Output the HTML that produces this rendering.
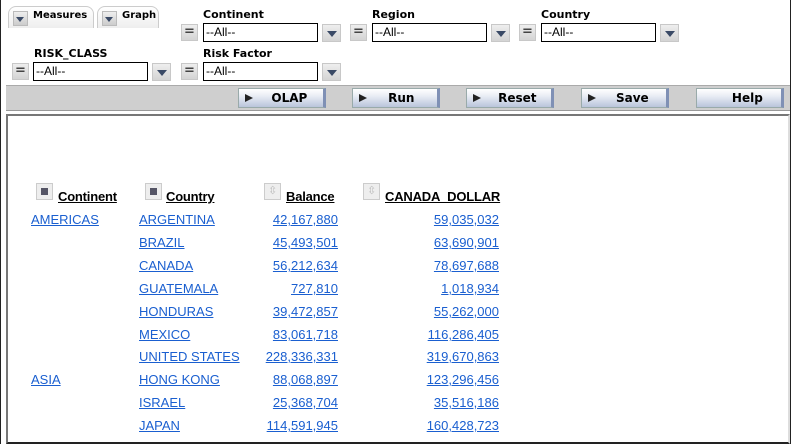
<!DOCTYPE html>
<html><head><meta charset="utf-8"><style>
*{box-sizing:border-box;margin:0;padding:0}
body{width:791px;height:444px;background:#fff;position:relative;overflow:hidden;font-family:"DejaVu Sans",Verdana,sans-serif}
.a{position:absolute}
.lbl{font-size:11px;font-weight:bold;color:#000}
.eq{width:17px;height:17px;background:linear-gradient(#eee,#d4d4d4);border:1px solid #c8c8c8;font-size:13px;line-height:14px;text-align:center;color:#444;font-weight:bold}
.inp{width:115px;height:19px;border:1px solid #000;background:#fff;font-family:"Liberation Sans",Arial,sans-serif;font-size:12px;line-height:17px;padding-left:2px}
.dd{width:19px;height:18px;background:linear-gradient(#eee,#d4d4d4);border:1px solid #c8c8c8}
.dd:after,.tab i:after{content:"";position:absolute;left:4px;top:6px;border-left:5px solid transparent;border-right:5px solid transparent;border-top:6px solid #3a4a66}
.btn{height:20px;width:88px;top:88px;background:linear-gradient(#fff 0%,#e8ecf4 40%,#b9c4db 100%);border:1px solid #9aa;border-right:3px solid #7f90b5;font-size:12px;font-weight:bold;text-align:center;line-height:18px}
.btn b{position:absolute;left:6px;top:5px;border-top:4px solid transparent;border-bottom:4px solid transparent;border-left:8px solid #222}
.tab{height:22px;top:6px;border:1px solid #ccc;border-bottom:none;border-radius:8px 8px 0 0;background:linear-gradient(#fff,#eee);font-size:10px;font-weight:bold;padding:3px 0 0 24px}
.tab i{position:absolute;left:4px;top:4px;width:15px;height:15px;background:linear-gradient(#eee,#ccc);border:1px solid #bbb}
.tab i:after{left:2px;top:5px;border-left-width:4px;border-right-width:4px;border-top-width:5px}
.f{font-family:"Liberation Sans",Arial,sans-serif;font-size:13px;color:#1a5fd0;text-decoration:underline;position:absolute}
.h{font-family:"Liberation Sans",Arial,sans-serif;font-size:13px;font-weight:bold;text-decoration:underline;position:absolute;top:189px;letter-spacing:-0.2px}
.ic{position:absolute;top:183px;width:17px;height:17px;background:#eee;border:1px solid #ccc}
.ic.s:after{content:"";position:absolute;left:4px;top:4px;width:7px;height:7px;background:#556}
.ic.u:after{content:"⇳";position:absolute;left:3px;top:0;font-size:11px;color:#bbb}
.r{text-align:right}
</style></head><body>
<div class="a" style="left:0;top:0;width:1px;height:444px;background:#222"></div>
<div class="a" style="right:0;top:0;width:1px;height:444px;background:#222"></div>
<div class="a tab" style="left:8px;width:86px"><i></i>Measures</div>
<div class="a tab" style="left:97px;width:62px"><i></i>Graph</div>

<div class="a lbl" style="left:203px;top:8px">Continent</div>
<div class="a eq" style="left:181px;top:24px">=</div><div class="a inp" style="left:203px;top:23px">--All--</div><div class="a dd" style="left:322px;top:24px"></div>
<div class="a lbl" style="left:372px;top:8px">Region</div>
<div class="a eq" style="left:350px;top:24px">=</div><div class="a inp" style="left:372px;top:23px">--All--</div><div class="a dd" style="left:491px;top:24px"></div>
<div class="a lbl" style="left:541px;top:8px">Country</div>
<div class="a eq" style="left:519px;top:24px">=</div><div class="a inp" style="left:541px;top:23px">--All--</div><div class="a dd" style="left:660px;top:24px"></div>

<div class="a lbl" style="left:34px;top:47px">RISK_CLASS</div>
<div class="a eq" style="left:12px;top:63px">=</div><div class="a inp" style="left:33px;top:62px">--All--</div><div class="a dd" style="left:152px;top:63px"></div>
<div class="a lbl" style="left:203px;top:47px">Risk Factor</div>
<div class="a eq" style="left:181px;top:63px">=</div><div class="a inp" style="left:203px;top:62px">--All--</div><div class="a dd" style="left:322px;top:63px"></div>

<div class="a" style="left:6px;top:85px;width:784px;height:26px;background:#cfcfcf;border-top:1px solid #aaa;border-bottom:1px solid #999"></div>
<div class="a btn" style="left:238px"><b></b>&nbsp;&nbsp;&nbsp;&nbsp;OLAP</div>
<div class="a btn" style="left:352px"><b></b>&nbsp;&nbsp;&nbsp;Run</div>
<div class="a btn" style="left:466px"><b></b>&nbsp;&nbsp;&nbsp;&nbsp;Reset</div>
<div class="a btn" style="left:581px"><b></b>&nbsp;&nbsp;&nbsp;&nbsp;Save</div>
<div class="a btn" style="left:696px">&nbsp;&nbsp;&nbsp;&nbsp;Help</div>

<div class="a" style="left:6px;top:114px;width:784px;height:330px;border:2px solid #777;border-right-color:#ddd;border-bottom:2px solid #222;background:#fff"></div>

<div class="ic s" style="left:36px"></div><div class="h" style="left:58px">Continent</div>
<div class="ic s" style="left:145px"></div><div class="h" style="left:166px">Country</div>
<div class="ic u" style="left:264px"></div><div class="h" style="left:286px">Balance</div>
<div class="ic u" style="left:363px"></div><div class="h" style="left:385px">CANADA_DOLLAR</div>

<div class="f" style="left:31px;top:212px">AMERICAS</div>
<div class="f" style="left:31px;top:372px">ASIA</div>
<div class="f" style="left:139px;top:212px">ARGENTINA</div>
<div class="f" style="left:139px;top:235px">BRAZIL</div>
<div class="f" style="left:139px;top:258px">CANADA</div>
<div class="f" style="left:139px;top:281px">GUATEMALA</div>
<div class="f" style="left:139px;top:304px">HONDURAS</div>
<div class="f" style="left:139px;top:327px">MEXICO</div>
<div class="f" style="left:139px;top:349px">UNITED STATES</div>
<div class="f" style="left:139px;top:372px">HONG KONG</div>
<div class="f" style="left:139px;top:395px">ISRAEL</div>
<div class="f" style="left:139px;top:418px">JAPAN</div>

<div class="f r" style="right:453px;top:212px">42,167,880</div>
<div class="f r" style="right:453px;top:235px">45,493,501</div>
<div class="f r" style="right:453px;top:258px">56,212,634</div>
<div class="f r" style="right:453px;top:281px">727,810</div>
<div class="f r" style="right:453px;top:304px">39,472,857</div>
<div class="f r" style="right:453px;top:327px">83,061,718</div>
<div class="f r" style="right:453px;top:349px">228,336,331</div>
<div class="f r" style="right:453px;top:372px">88,068,897</div>
<div class="f r" style="right:453px;top:395px">25,368,704</div>
<div class="f r" style="right:453px;top:418px">114,591,945</div>

<div class="f r" style="right:292px;top:212px">59,035,032</div>
<div class="f r" style="right:292px;top:235px">63,690,901</div>
<div class="f r" style="right:292px;top:258px">78,697,688</div>
<div class="f r" style="right:292px;top:281px">1,018,934</div>
<div class="f r" style="right:292px;top:304px">55,262,000</div>
<div class="f r" style="right:292px;top:327px">116,286,405</div>
<div class="f r" style="right:292px;top:349px">319,670,863</div>
<div class="f r" style="right:292px;top:372px">123,296,456</div>
<div class="f r" style="right:292px;top:395px">35,516,186</div>
<div class="f r" style="right:292px;top:418px">160,428,723</div>
</body></html>
